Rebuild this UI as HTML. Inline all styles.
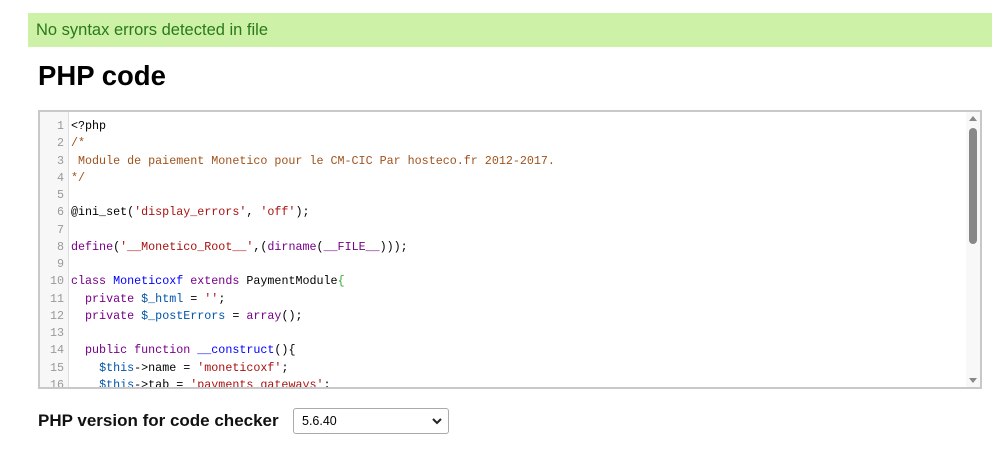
<!DOCTYPE html>
<html><head><style>
body{margin:0;background:#fff;font-family:"Liberation Sans",sans-serif;width:1000px;height:461px;overflow:hidden;position:relative}
.ok{position:absolute;left:28px;top:13px;width:964px;height:34px;background:#ccf1a7;color:#2a7a1a;font-size:16.5px;line-height:35px;box-sizing:border-box;padding-left:8px}
h1{position:absolute;left:38px;top:60px;margin:0;font-size:27.5px;font-weight:bold;color:#000}
.box{position:absolute;left:38px;top:110px;width:944px;height:279px;border:2px solid #c8c8c8;box-sizing:border-box;overflow:hidden;background:#fff}
.gut{position:absolute;left:0;top:0;width:28px;height:100%;background:#f7f7f7;border-right:1px solid #ddd}
.code{position:absolute;left:0;top:6px;font-family:"Liberation Mono",monospace;font-size:11.7px;line-height:17.27px;white-space:pre;color:#000}
.ln{display:inline-block;width:24px;text-align:right;color:#999;margin-right:7px}
.cm{color:#a0521c}.kw{color:#770088}.st{color:#aa1111}.df{color:#0000ff}.vr{color:#0055aa}.gr{color:#3a3}
.sb{position:absolute;right:0;top:0;width:14px;height:100%;background:#f8f8f8}
.th{position:absolute;left:3px;top:16px;width:8px;height:116px;background:#888;border-radius:4px}
.lab{position:absolute;left:38px;top:411px;font-size:17px;font-weight:bold;color:#111}
.sel{position:absolute;left:293px;top:408px;width:156px;height:26px;border:1px solid #aaa;border-radius:3px;box-sizing:border-box;font-size:12.5px;line-height:24px;padding-left:8px;color:#000}
</style></head><body>
<div class="ok">No syntax errors detected in file</div>
<h1>PHP code</h1>
<div class="box"><div class="gut"></div>
<div class="code"><span class="ln">1</span>&lt;?php
<span class="ln">2</span><span class="cm">/*</span>
<span class="ln">3</span><span class="cm"> Module de paiement Monetico pour le CM-CIC Par hosteco.fr 2012-2017.</span>
<span class="ln">4</span><span class="cm">*/</span>
<span class="ln">5</span>
<span class="ln">6</span>@ini_set(<span class="st">'display_errors'</span>, <span class="st">'off'</span>);
<span class="ln">7</span>
<span class="ln">8</span><span class="kw">define</span>(<span class="st">'__Monetico_Root__'</span>,(<span class="kw">dirname</span>(<span class="kw">__FILE__</span>)));
<span class="ln">9</span>
<span class="ln">10</span><span class="kw">class</span> <span class="df">Moneticoxf</span> <span class="kw">extends</span> PaymentModule<span class="gr">{</span>
<span class="ln">11</span>  <span class="kw">private</span> <span class="vr">$_html</span> = <span class="st">''</span>;
<span class="ln">12</span>  <span class="kw">private</span> <span class="vr">$_postErrors</span> = <span class="kw">array</span>();
<span class="ln">13</span>
<span class="ln">14</span>  <span class="kw">public</span> <span class="kw">function</span> <span class="df">__construct</span>(){
<span class="ln">15</span>    <span class="vr">$this</span>-&gt;name = <span class="st">'moneticoxf'</span>;
<span class="ln">16</span>    <span class="vr">$this</span>-&gt;tab = <span class="st">'payments_gateways'</span>;
</div>
<div class="sb"><div style="position:absolute;left:3px;top:4px;border:4px solid transparent;border-bottom:5px solid #888;border-top:0"></div><div class="th"></div><div style="position:absolute;left:3px;bottom:4px;border:4px solid transparent;border-top:5px solid #888;border-bottom:0"></div></div>
</div>
<div class="lab">PHP version for code checker</div>
<div class="sel">5.6.40<svg style="position:absolute;right:6px;top:9px" width="10" height="7" viewBox="0 0 10 7"><path d="M1 1l4 4 4-4" stroke="#222" stroke-width="2" fill="none"/></svg></div>
</body></html>
